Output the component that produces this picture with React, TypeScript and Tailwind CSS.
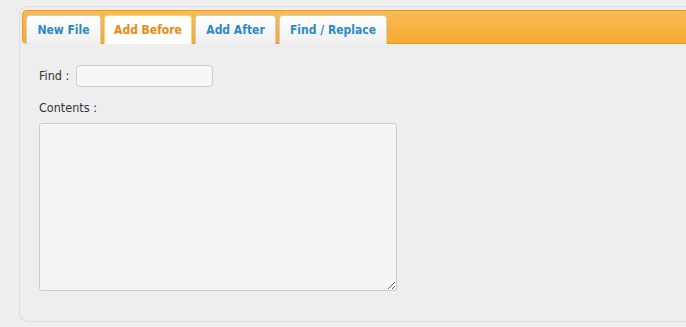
import React from 'react';

const tabs = [
  { label: 'New File', width: 'w-[75px]', active: false },
  { label: 'Add Before', width: 'w-[88px]', active: true },
  { label: 'Add After', width: 'w-[81px]', active: false },
  { label: 'Find / Replace', width: 'w-[108px]', active: false },
];

const App: React.FC = () => {
  return (
    <div
      className="w-full h-[327px] overflow-hidden bg-[#eeeeee] pt-[6px] pl-[19px] text-[12.5px] text-[#333333]"
      style={{ fontFamily: '"DejaVu Sans Condensed", "DejaVu Sans", sans-serif' }}
    >
      <div className="h-[316px] border border-r-0 border-[#dddddd] rounded-l-[9px] pt-[3px] pl-[2px]">
        {/* Tab bar */}
        <div className="h-[34px] flex items-end gap-[3px] pl-[3px] border border-r-0 border-[#f0990f] rounded-l-[5px] bg-gradient-to-b from-[#f8bb55] to-[#f5aa33]">
          {tabs.map((t) => (
            <div
              key={t.label}
              className={
                t.active
                  ? `${t.width} h-[29px] -mb-px flex items-center justify-center rounded-t-[4px] border border-b-0 border-[#fad66c] bg-white font-bold text-[12px] text-[#f0870f]`
                  : `${t.width} h-[29px] -mb-px flex items-center justify-center rounded-t-[4px] border border-b-0 border-[#cfcfcf] bg-gradient-to-b from-[#ffffff] to-[#efefef] font-bold text-[12px] text-[#2b8ac6]`
              }
            >
              {t.label}
            </div>
          ))}
        </div>

        {/* Form */}
        <div className="pl-[17px] pt-[21px]">
          <div className="flex items-center gap-[7px]">
            <span>Find :</span>
            <input
              type="text"
              className="w-[137px] h-[22px] rounded-[4px] border border-[#cccccc] bg-[#f7f7f7] outline-none"
            />
          </div>
          <div className="mt-[12px]">Contents :</div>
          <textarea className="block mt-[5px] w-[358px] h-[168px] rounded-[3px] border border-[#cccccc] bg-[#f5f5f5] outline-none" />
        </div>
      </div>
    </div>
  );
};

export default App;
